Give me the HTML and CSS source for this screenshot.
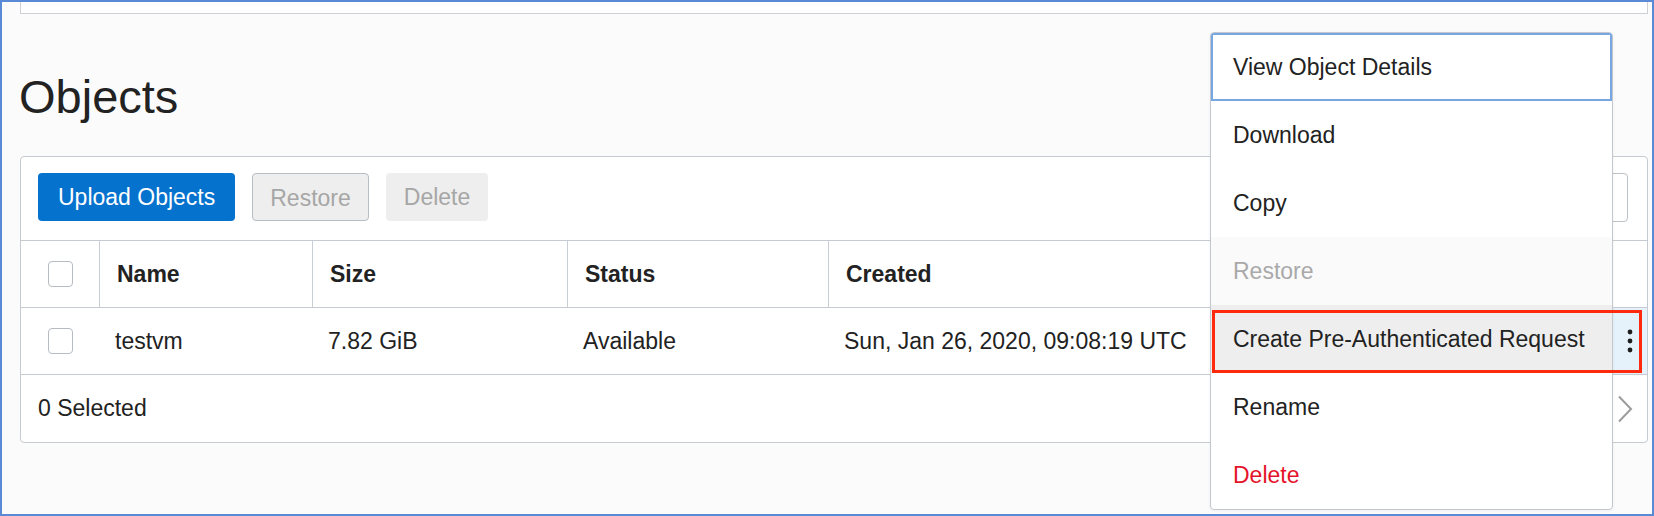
FILE: index.html
```html
<!DOCTYPE html>
<html lang="en">
<head>
<meta charset="utf-8">
<title>Objects</title>
<link rel="stylesheet" href="styles.css">
</head>
<body>
<div class="frame">
  <div class="topbox"></div>
  <h1 class="title">Objects</h1>
  <div class="card">
    <div class="toolbar">
      <div class="actions">
        <button class="btn btn-primary">Upload Objects</button>
        <button class="btn btn-outline" disabled>Restore</button>
        <button class="btn btn-plain" disabled>Delete</button>
      </div>
      <div class="search"></div>
    </div>
    <div class="row head">
      <div class="cell cb"><span class="checkbox"></span></div>
      <div class="cell th">Name</div>
      <div class="cell th">Size</div>
      <div class="cell th">Status</div>
      <div class="cell th">Created</div>
      <div class="cell act"></div>
    </div>
    <div class="row data">
      <div class="cell cb"><span class="checkbox"></span></div>
      <div class="cell td">testvm</div>
      <div class="cell td">7.82 GiB</div>
      <div class="cell td">Available</div>
      <div class="cell td">Sun, Jan 26, 2020, 09:08:19 UTC</div>
      <div class="cell act kebab">
        <svg width="6" height="24" viewBox="0 0 6 24"><circle cx="3" cy="3" r="2.4"/><circle cx="3" cy="12" r="2.4"/><circle cx="3" cy="21" r="2.4"/></svg>
      </div>
    </div>
    <div class="footer">
      <span class="selected">0 Selected</span>
      <span class="pager">
        <svg width="16" height="28" viewBox="0 0 16 28"><polyline points="2,1.5 14,14 2,26.5"/></svg>
      </span>
    </div>
  </div>

  <ul class="menu">
    <li class="item focused">View Object Details</li>
    <li class="item">Download</li>
    <li class="item">Copy</li>
    <li class="item disabled">Restore</li>
    <li class="item active">Create Pre-Authenticated Request</li>
    <li class="item">Rename</li>
    <li class="item danger">Delete</li>
  </ul>
  <div class="highlight"></div>
</div>
</body>
</html>
```

FILE: styles.css
```css
html, body {
  margin: 0;
  padding: 0;
}

.frame {
  position: relative;
  width: 1654px;
  height: 516px;
  box-sizing: border-box;
  border: 2px solid #5a89d6;
  background: #fbfbfb;
  overflow: hidden;
  font-family: "Liberation Sans", Arial, Helvetica, sans-serif;
  color: #222;
}

.topbox {
  height: 11px;
  margin: 0 4px 0 18px;
  border: 1px solid #cdd1d5;
  border-top: none;
  background: #fff;
}

.title {
  margin: 59px 0 0 17px;
  font-size: 47px;
  line-height: 47px;
  font-weight: 400;
  color: #222;
}

.card {
  margin: 36px 4px 0 18px;
  background: #fff;
  border: 1px solid #c6cbd1;
  border-radius: 4px;
}

.toolbar {
  display: flex;
  justify-content: space-between;
  align-items: flex-start;
  padding: 16px 19px 18px 17px;
  border-bottom: 1px solid #c6cbd1;
}

.actions {
  display: flex;
  gap: 17px;
}

.btn {
  height: 48px;
  box-sizing: border-box;
  padding: 0 17px;
  border: none;
  border-radius: 4px;
  font-family: "Liberation Sans", Arial, Helvetica, sans-serif;
  font-size: 23px;
  line-height: 48px;
}

.btn-primary {
  padding: 0 20px;
  background: #0572ce;
  color: #fff;
}

.btn-outline {
  padding: 0 17px;
  border: 1px solid #b7bdc4;
  background: #eeeeee;
  color: #a6a6a6;
}

.btn-plain {
  padding: 0 18px;
  background: #eeeeee;
  color: #a6a6a6;
}

.search {
  width: 300px;
  height: 49px;
  box-sizing: border-box;
  border: 1px solid #bcc2c8;
  border-radius: 4px;
}

.row {
  display: grid;
  grid-template-columns: 78px 213px 255px 261px 1fr 35px;
  height: 67px;
  box-sizing: border-box;
  border-bottom: 1px solid #c6cbd1;
}

.cell {
  display: flex;
  align-items: center;
  font-size: 23px;
  white-space: nowrap;
}

.cb {
  justify-content: center;
}

.checkbox {
  display: block;
  width: 25px;
  height: 26px;
  box-sizing: border-box;
  border: 1px solid #b7bcc2;
  border-radius: 4px;
  background: #fff;
}

.th {
  padding-left: 17px;
  border-left: 1px solid #c9ced4;
  font-weight: 700;
}

.td {
  padding-left: 16px;
}

.kebab {
  justify-content: center;
  background: #e5f1fb;
}

.kebab svg circle {
  fill: #1e1e1e;
}

.footer {
  display: flex;
  justify-content: space-between;
  align-items: center;
  height: 67px;
  padding: 0 14px 0 17px;
  font-size: 23px;
}

.pager {
  display: flex;
  align-items: center;
}

.pager svg polyline {
  fill: none;
  stroke: #9c9c9c;
  stroke-width: 2;
}

.menu {
  position: absolute;
  left: 1208px;
  top: 30px;
  width: 403px;
  margin: 0;
  padding: 0;
  list-style: none;
  box-sizing: border-box;
  border: 1px solid #c3c8ce;
  border-radius: 4px;
  background: #fff;
  box-shadow: 0 1px 3px rgba(0, 0, 0, 0.06);
  overflow: hidden;
}

.item {
  height: 68px;
  box-sizing: border-box;
  padding-left: 22px;
  display: flex;
  align-items: center;
  font-size: 23px;
  color: #222;
  white-space: nowrap;
}

.item.focused {
  box-shadow: inset 0 0 0 2px #78a6e2;
}

.item.disabled {
  background: #fafafa;
  color: #a9a9a9;
}

.item.active {
  background: #eeeeee;
}

.item.danger {
  color: #e4132b;
}

.highlight {
  position: absolute;
  left: 1210px;
  top: 308px;
  width: 430px;
  height: 63px;
  box-sizing: border-box;
  border: 3px solid #ff2a0d;
}
```
